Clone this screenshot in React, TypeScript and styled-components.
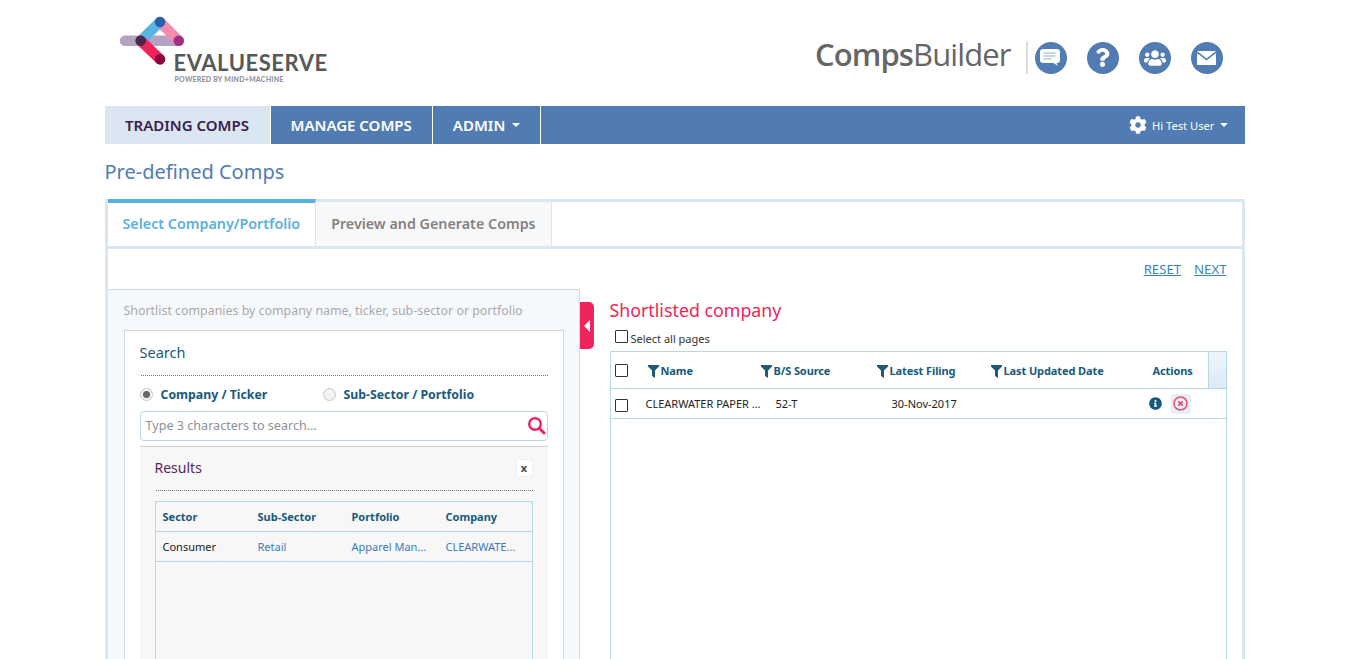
import React from "react";
import styled, { createGlobalStyle } from "styled-components";
import { FaCog, FaInfoCircle, FaQuestion, FaUsers } from "react-icons/fa";

const clrs = {
    blue: "#507cb3",
    pale: "#dae6f1",
    sky: "#5bb0df",
    red: "#f0245a",
    navy: "#17597f",
    line: "#b5d9e8",
};

const uiFont = `"Noto Sans", "Open Sans", sans-serif`;

const GlobalStyle = createGlobalStyle`
    html, body {
        margin: 0;
        height: 659px;
        overflow: hidden;
        background: #fff;
        font-family: ${uiFont};
    }
`;

const Page = styled.div`
    width: 1140px;
    height: 659px;
    overflow: hidden;
    margin: 0 auto;
`;

const Header = styled.header`
    height: 106px;
    display: flex;
    align-items: flex-start;
    justify-content: space-between;
`;

const Logo = styled.div`
    margin: 16px 0 0 14px;
    display: flex;
    flex-direction: column;
    position: relative;
    width: 210px;
    height: 68px;
`;

const LogoMark = styled.svg`
    position: absolute;
    left: 0;
    top: 0;
`;

const LogoName = styled.div`
    margin: 36px 0 0 55px;
    font-family: "Lato", sans-serif;
    font-size: 22px;
    line-height: 22px;
    font-weight: 700;
    letter-spacing: 0.55px;
    color: #58585a;
    white-space: nowrap;
`;

const LogoTag = styled.div`
    margin: 1px 0 0 56px;
    font-family: "Lato", sans-serif;
    font-size: 7px;
    line-height: 8px;
    font-weight: 900;
    letter-spacing: 0.22px;
    color: #939598;
    white-space: nowrap;
`;

const Tools = styled.div`
    display: flex;
    align-items: center;
    margin: 41px 22px 0 0;
`;

const Product = styled.div`
    font-family: "Open Sans", sans-serif;
    font-size: 31px;
    line-height: 44px;
    color: #666;
    letter-spacing: -0.9px;
    padding: 0 15px 7px 0;
    margin-right: 7px;
    border-right: 2px solid #dcdcdc;
    height: 33px;
    box-sizing: border-box;
    display: flex;
    align-items: center;
    b {
        font-weight: 600;
    }
`;

const ToolButton = styled.span`
    width: 32px;
    height: 32px;
    border-radius: 50%;
    background: ${clrs.blue};
    color: #fff;
    display: flex;
    align-items: center;
    justify-content: center;
    margin-left: 20px;
    &:first-of-type {
        margin-left: 0;
    }
`;

const Nav = styled.nav`
    height: 38px;
    background: ${clrs.blue};
    display: flex;
    align-items: stretch;
`;

const NavItem = styled.a<{ $active?: boolean }>`
    display: flex;
    align-items: center;
    justify-content: center;
    gap: 7px;
    width: ${(p) => (p.$active ? "165px" : "auto")};
    padding: ${(p) => (p.$active ? "0" : "0 20px")};
    background: ${(p) => (p.$active ? clrs.pale : "transparent")};
    color: ${(p) => (p.$active ? "#3b1c4f" : "#fff")};
    border-right: 1px solid #fff;
    font-size: 15px;
    font-weight: 600;
    white-space: nowrap;
`;

const Caret = styled.i`
    width: 0;
    height: 0;
    border-left: 4px solid transparent;
    border-right: 4px solid transparent;
    border-top: 4px solid #fff;
`;

const UserMenu = styled.div`
    margin-left: auto;
    padding-right: 17px;
    display: flex;
    align-items: center;
    gap: 5px;
    color: #fff;
    font-size: 11.2px;
`;

const PageTitle = styled.h1`
    margin: 0;
    height: 55px;
    padding-top: 13px;
    box-sizing: border-box;
    font-size: 20px;
    line-height: 30px;
    font-weight: 400;
    color: ${clrs.blue};
`;

const Panel = styled.div`
    border: 3px solid ${clrs.pale};
    height: 600px;
    box-sizing: border-box;
`;

const Tabs = styled.div`
    display: flex;
    height: 47px;
    border-bottom: 3px solid ${clrs.pale};
    margin-top: -3px;
`;

const Tab = styled.div<{ $active?: boolean }>`
    padding: 0 15px 2px;
    display: flex;
    align-items: center;
    box-sizing: border-box;
    font-size: 14.3px;
    font-weight: 600;
    white-space: nowrap;
    color: ${(p) => (p.$active ? clrs.sky : "#85827f")};
    background: ${(p) => (p.$active ? "#fff" : "#f7f8f9")};
    border-top: ${(p) => (p.$active ? `4px solid ${clrs.sky}` : `3px solid ${clrs.pale}`)};
    border-right: 1px solid ${clrs.pale};
`;

const ActionRow = styled.div`
    height: 40px;
    padding: 0 15px 0 0;
    display: flex;
    align-items: center;
    justify-content: flex-end;
    gap: 13px;
`;

const TextLink = styled.a`
    font-size: 13.2px;
    color: #3c83c4;
    text-decoration: underline;
`;

const Columns = styled.div`
    display: flex;
    align-items: flex-start;
`;

const LeftPane = styled.div`
    position: relative;
    flex: none;
    width: 472px;
    height: 400px;
    box-sizing: border-box;
    background: #f6f9fc;
    border: 1px solid #d3d7da;
    border-left: 0;
    padding: 11px 15px 0 16px;
`;

const Hint = styled.p`
    margin: 0 0 10px;
    font-size: 12.4px;
    line-height: 19px;
    color: #a9a9a9;
`;

const Collapse = styled.button`
    position: absolute;
    left: 472px;
    top: 12px;
    width: 14px;
    height: 47px;
    padding: 0;
    border: 0;
    border-radius: 0 5px 5px 0;
    background: ${clrs.red};
    display: flex;
    align-items: center;
    justify-content: center;
    &::before {
        content: "";
        border-top: 6px solid transparent;
        border-bottom: 6px solid transparent;
        border-right: 6px solid #fff;
    }
`;

const SearchCard = styled.div`
    background: #fff;
    border: 1px solid #d3d7da;
    height: 360px;
    padding: 9px 15px 0 15px;
`;

const SectionTitle = styled.div<{ $results?: boolean }>`
    font-size: ${(p) => (p.$results ? "14px" : "14.5px")};
    line-height: 24px;
    color: ${(p) => (p.$results ? "#54295f" : clrs.navy)};
    padding-bottom: ${(p) => (p.$results ? "10px" : "11px")};
    border-bottom: 1px dotted #777;
    margin-left: 1px;
    text-indent: -1px;
    display: flex;
    align-items: center;
    justify-content: space-between;
`;

const RadioRow = styled.div`
    display: flex;
    height: 35px;
    box-sizing: border-box;
    padding-top: 2px;
    align-items: center;
`;

const RadioLabel = styled.label`
    width: 183px;
    display: flex;
    align-items: center;
    gap: 8px;
    font-size: 12.3px;
    font-weight: 700;
    color: ${clrs.navy};
    white-space: nowrap;
`;

const RadioDot = styled.span<{ $checked?: boolean }>`
    width: 13px;
    height: 13px;
    box-sizing: border-box;
    border-radius: 50%;
    border: 1px solid #c8c8c8;
    background: #f2f2f2;
    display: flex;
    align-items: center;
    justify-content: center;
    &::after {
        content: "";
        display: ${(p) => (p.$checked ? "block" : "none")};
        width: 7px;
        height: 7px;
        border-radius: 50%;
        background: #666;
    }
`;

const SearchBox = styled.div`
    height: 30px;
    box-sizing: border-box;
    border: 1px solid ${clrs.line};
    border-radius: 4px;
    padding: 0 1px 2px 5px;
    display: flex;
    align-items: center;
    justify-content: space-between;
    font-size: 12.6px;
    color: #8b9298;
`;

const Results = styled.div`
    margin-top: 5px;
    height: 240px;
    background: #f7f7f7;
    border-top: 1px solid #d3d3d3;
    padding: 9px 15px 0 15px;
`;

const CloseButton = styled.button`
    width: 17px;
    height: 18px;
    padding: 0;
    border: 1px solid #eee;
    border-radius: 2px;
    background: #fff;
    font-family: ${uiFont};
    font-size: 11px;
    line-height: 14px;
    font-weight: 700;
    color: #444;
`;

const ResultTable = styled.div`
    margin-top: 10px;
    height: 240px;
    border: 1px solid ${clrs.line};
`;

const ResultRow = styled.div<{ $head?: boolean }>`
    display: grid;
    grid-template-columns: 95px 94px 94px 1fr;
    align-items: center;
    height: 29px;
    padding-left: 7px;
    border-bottom: 1px solid ${clrs.line};
    font-size: 11px;
    font-weight: ${(p) => (p.$head ? 700 : 400)};
    color: ${(p) => (p.$head ? clrs.navy : "#222")};
`;

const CellLink = styled.a`
    color: #3c7cbd;
`;

const RightPane = styled.div`
    flex: 1;
    padding: 8px 15px 0 30px;
    min-width: 0;
`;

const RightTitle = styled.h2`
    margin: 0;
    font-size: 17.8px;
    line-height: 26px;
    font-weight: 400;
    color: ${clrs.red};
`;

const SelectAll = styled.label`
    display: flex;
    align-items: flex-start;
    height: 15px;
    margin: 7px 0 6px 5px;
    gap: 3px;
    font-size: 11px;
    line-height: 12px;
    color: #333;
    span:last-child {
        margin-top: 3px;
    }
`;

const Check = styled.span<{ $low?: boolean }>`
    display: block;
    flex: none;
    width: 13px;
    height: 13px;
    box-sizing: border-box;
    border: 1px solid #333;
    border-radius: 1px;
    background: #fff;
    margin-top: ${(p) => (p.$low ? "3px" : "0")};
`;

const ShortTable = styled.div`
    height: 400px;
    border: 1px solid ${clrs.line};
`;

const ShortRow = styled.div<{ $head?: boolean }>`
    position: relative;
    display: grid;
    grid-template-columns: ${(p) => (p.$head ? "33px 113px 116px 114px 162px 1fr" : "31px 130px 116px 257px 1fr")};
    align-items: center;
    height: ${(p) => (p.$head ? "36px" : "29px")};
    padding-left: 4px;
    border-bottom: 1px solid ${clrs.line};
    font-size: 11px;
    letter-spacing: ${(p) => (p.$head ? "-0.1px" : "0")};
    font-weight: ${(p) => (p.$head ? 700 : 400)};
    color: ${(p) => (p.$head ? clrs.navy : "#222")};
    white-space: nowrap;
`;

const HeadCell = styled.span`
    display: flex;
    align-items: center;
    gap: 2px;
    svg {
        margin-top: 2px;
    }
`;

const ScrollCap = styled.span`
    position: absolute;
    top: 0;
    right: 0;
    bottom: 0;
    width: 17px;
    border-left: 1px solid ${clrs.line};
    background: linear-gradient(#eef5fa, #dcebf5);
`;

const RowActions = styled.span`
    display: flex;
    align-items: center;
    gap: 9px;
    color: ${clrs.navy};
`;

const RemoveButton = styled.span`
    width: 20px;
    height: 20px;
    border-radius: 3px;
    background: #e6eff5;
    display: flex;
    align-items: center;
    justify-content: center;
`;

const ChatIcon = () => (
    <svg width="21" height="17" viewBox="0 0 21 17">
        <path d="M3 0h14a3 3 0 0 1 3 3v8a3 3 0 0 1-3 3h-.5l1.500 3-4.500-3H3a3 3 0 0 1-3-3V3a3 3 0 0 1 3-3z" fill="#fff" />
        <path d="M3.500 4h12M3.500 7h12M3.500 10h8" stroke="#8fb0d6" strokeWidth="1.100" />
    </svg>
);

const MailIcon = () => (
    <svg width="19" height="14" viewBox="0 0 19 14" fill="#fff">
        <path d="M0 0h19L9.500 7.500z" />
        <path d="M0 2l9.500 7.500L19 2v12H0z" />
    </svg>
);

const SearchIcon = () => (
    <svg width="19" height="19" viewBox="0 0 19 19" fill="none" stroke={clrs.red}>
        <circle cx="8" cy="8" r="5.800" strokeWidth="2.400" />
        <path d="M12.500 12.500l4.500 4.500" strokeWidth="3" strokeLinecap="round" />
    </svg>
);

const RemoveIcon = () => (
    <svg width="15" height="15" viewBox="0 0 15 15" fill="none" stroke="#e9506f">
        <circle cx="7.500" cy="7.500" r="6.500" strokeWidth="1.500" />
        <path d="M5.300 5.300l4.400 4.400M9.700 5.300l-4.400 4.400" strokeWidth="1.800" />
    </svg>
);

const Filter = () => (
    <svg width="11" height="13" viewBox="0 0 11 13" fill="#1f5a78">
        <path d="M0 0h11v1.500L7 5.500V13L4 11V5.500L0 1.500z" />
    </svg>
);

export default function App() {
    return (
        <>
            <GlobalStyle />
            <Page>
                <Header>
                    <Logo>
                        <LogoMark width="100" height="55" viewBox="0 0 100 55">
                            <g strokeWidth="10.500" strokeLinecap="round" fill="none">
                                <path d="M6 24.700h54" stroke="#b2a3c2" />
                                <path d="M41 6l18.700 18.700" stroke="#f48cb1" />
                                <path d="M21.700 24.700L41 6" stroke="#5ab4e6" />
                                <path d="M21.700 24.700L41 43.300" stroke="#f0245a" />
                            </g>
                            <circle cx="41" cy="6" r="5.200" fill="#2e5ea8" />
                            <circle cx="59.700" cy="24.700" r="5.200" fill="#a22f83" />
                            <circle cx="21.700" cy="24.700" r="5.200" fill="#47284f" />
                            <circle cx="41" cy="43.300" r="5.200" fill="#85083e" />
                        </LogoMark>
                        <LogoName>EVALUESERVE</LogoName>
                        <LogoTag>POWERED BY MIND+MACHINE</LogoTag>
                    </Logo>
                    <Tools>
                        <Product>
                            <b>Comps</b>Builder
                        </Product>
                        <ToolButton>
                            <ChatIcon />
                        </ToolButton>
                        <ToolButton>
                            <FaQuestion size={19} />
                        </ToolButton>
                        <ToolButton>
                            <FaUsers size={22} />
                        </ToolButton>
                        <ToolButton>
                            <MailIcon />
                        </ToolButton>
                    </Tools>
                </Header>
                <Nav>
                    <NavItem $active>TRADING COMPS</NavItem>
                    <NavItem>MANAGE COMPS</NavItem>
                    <NavItem>
                        ADMIN <Caret />
                    </NavItem>
                    <UserMenu>
                        <FaCog size={18} />
                        Hi Test User
                        <Caret />
                    </UserMenu>
                </Nav>
                <PageTitle>Pre-defined Comps</PageTitle>
                <Panel>
                    <Tabs>
                        <Tab $active>Select Company/Portfolio</Tab>
                        <Tab>Preview and Generate Comps</Tab>
                    </Tabs>
                    <ActionRow>
                        <TextLink>RESET</TextLink>
                        <TextLink>NEXT</TextLink>
                    </ActionRow>
                    <Columns>
                        <LeftPane>
                            <Hint>Shortlist companies by company name, ticker, sub-sector or portfolio</Hint>
                            <Collapse aria-label="collapse" />
                            <SearchCard>
                                <SectionTitle>Search</SectionTitle>
                                <RadioRow>
                                    <RadioLabel>
                                        <RadioDot $checked />
                                        Company / Ticker
                                    </RadioLabel>
                                    <RadioLabel>
                                        <RadioDot />
                                        Sub-Sector / Portfolio
                                    </RadioLabel>
                                </RadioRow>
                                <SearchBox>
                                    Type 3 characters to search…
                                    <SearchIcon />
                                </SearchBox>
                                <Results>
                                    <SectionTitle $results>
                                        Results
                                        <CloseButton>x</CloseButton>
                                    </SectionTitle>
                                    <ResultTable>
                                        <ResultRow $head>
                                            <span>Sector</span>
                                            <span>Sub-Sector</span>
                                            <span>Portfolio</span>
                                            <span>Company</span>
                                        </ResultRow>
                                        <ResultRow>
                                            <span>Consumer</span>
                                            <CellLink>Retail</CellLink>
                                            <CellLink>Apparel Man…</CellLink>
                                            <CellLink>CLEARWATE…</CellLink>
                                        </ResultRow>
                                    </ResultTable>
                                </Results>
                            </SearchCard>
                        </LeftPane>
                        <RightPane>
                            <RightTitle>Shortlisted company</RightTitle>
                            <SelectAll>
                                <Check />
                                <span>Select all pages</span>
                            </SelectAll>
                            <ShortTable>
                                <ShortRow $head>
                                    <Check />
                                    <HeadCell>
                                        <Filter />
                                        Name
                                    </HeadCell>
                                    <HeadCell>
                                        <Filter />
                                        B/S Source
                                    </HeadCell>
                                    <HeadCell>
                                        <Filter />
                                        Latest Filing
                                    </HeadCell>
                                    <HeadCell>
                                        <Filter />
                                        Last Updated Date
                                    </HeadCell>
                                    <span>Actions</span>
                                    <ScrollCap />
                                </ShortRow>
                                <ShortRow>
                                    <Check $low />
                                    <span>CLEARWATER PAPER …</span>
                                    <span>52-T</span>
                                    <span>30-Nov-2017</span>
                                    <RowActions>
                                        <FaInfoCircle size={13} />
                                        <RemoveButton>
                                            <RemoveIcon />
                                        </RemoveButton>
                                    </RowActions>
                                </ShortRow>
                            </ShortTable>
                        </RightPane>
                    </Columns>
                </Panel>
            </Page>
        </>
    );
}
